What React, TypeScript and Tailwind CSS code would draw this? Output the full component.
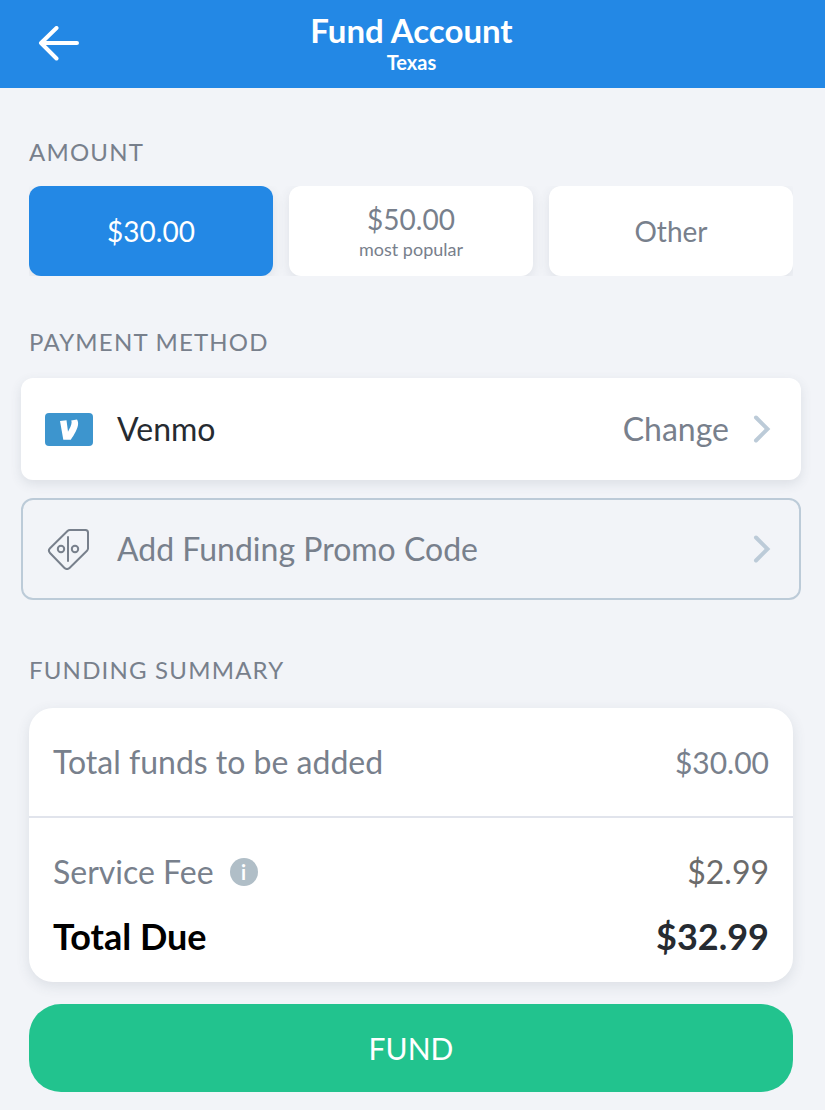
import { useState } from "react";

const amounts = [
    { label: "$30.00" },
    { label: "$50.00", note: "most popular" },
    { label: "Other" },
];

const ArrowLeft = () => (
    <svg className="h-[36px] w-[42px]" viewBox="0 0 42 36" fill="none" stroke="currentColor" strokeWidth="4" strokeLinecap="round" strokeLinejoin="round" aria-hidden="true">
        <path d="M39 17H3M18.500 2L3 17l15.500 15.500" />
    </svg>
);

const Chevron = () => (
    <svg className="h-7 w-[18px] text-[#bccbd8]" viewBox="0 0 18 28" fill="none" stroke="currentColor" strokeWidth="4" strokeLinecap="round" strokeLinejoin="miter" aria-hidden="true">
        <path d="M3 2.500L14.500 14L3 25.500" />
    </svg>
);

const VenmoLogo = () => (
    <svg className="h-[33px] w-12" viewBox="0 0 48 33" aria-hidden="true">
        <rect width="48" height="33" rx="4" fill="#3d95ce" />
        <path d="M15 8L21.500 7.300L23 18.800C24.600 15.800 26.600 12 26.600 9.600C26.600 8.600 26.400 8 26.200 7.600L32 6.500C32.800 7.800 33.100 9 33.100 10.500C33.100 15.500 29 22 25.800 26.700H18.300Z" fill="#fff" />
    </svg>
);

const PromoTag = () => (
    <svg className="h-[42px] w-[42px]" viewBox="0 0 42 42" fill="none" stroke="currentColor" strokeWidth="2" strokeLinecap="round" strokeLinejoin="round" aria-hidden="true">
        <path d="M23 2H38.500a2.500 2.500 0 0 1 2.500 2.500V20.500a3 3 0 0 1-1 2.200L22.500 40a3.500 3.500 0 0 1-5 0L3 25a3.500 3.500 0 0 1 0-4.800L20.500 3a3.500 3.500 0 0 1 2.500-1z" />
        <path d="M21 9v24" />
        <circle cx="14" cy="21" r="3.200" />
        <circle cx="28" cy="21" r="3.200" />
    </svg>
);

const SectionTitle = ({ children }: { children: string }) => (
    <h2 className="text-2xl leading-8 tracking-wider uppercase">{children}</h2>
);

const App = () => {
    const [selected, setSelected] = useState("$30.00");

    return (
        <div className="min-h-screen bg-[#f2f4f8] font-['Lato',sans-serif] text-[#78808c]">
            <header className="grid h-22 grid-cols-[1fr_auto_1fr] items-center bg-[#2388e5] pr-10 pl-[38px] text-white">
                <button type="button" aria-label="Back" className="justify-self-start">
                    <ArrowLeft />
                </button>
                <div className="text-center font-bold">
                    <h1 className="text-[33px] leading-9">Fund Account</h1>
                    <p className="text-xl leading-7">Texas</p>
                </div>
            </header>

            <main className="pt-12 pr-8 pb-[18px] pl-[29px]">
                <section>
                    <SectionTitle>Amount</SectionTitle>
                    <div className="mt-[18px] grid grid-cols-3 gap-4 overflow-hidden">
                        {amounts.map(({ label, note }) => (
                            <button
                                key={label}
                                type="button"
                                aria-pressed={selected === label}
                                onClick={() => setSelected(label)}
                                className={`flex h-[90px] flex-col items-center justify-center rounded-xl text-[28px] leading-8 shadow-[0_4px_12px_rgba(60,70,90,0.10)] ${
                                    note ? "pt-1" : ""
                                } ${selected === label ? "bg-[#2388e5] text-white" : "bg-white"}`}
                            >
                                {label}
                                {note && <span className="text-lg leading-7">{note}</span>}
                            </button>
                        ))}
                    </div>
                </section>

                <section className="mt-[50px]">
                    <SectionTitle>Payment Method</SectionTitle>
                    <div className="-mx-2 mt-5 flex flex-col gap-[18px] text-[32px] leading-10">
                        <button type="button" className="flex h-[102px] items-center rounded-xl bg-white pr-[30px] pl-6 shadow-[0_4px_12px_rgba(60,70,90,0.12)]">
                            <VenmoLogo />
                            <span className="ml-6 text-[#262b31]">Venmo</span>
                            <span className="mr-6 ml-auto">Change</span>
                            <Chevron />
                        </button>
                        <button type="button" className="flex h-[102px] items-center rounded-xl border-2 border-[#bccbd8] pr-7 pl-6">
                            <PromoTag />
                            <span className="mr-auto ml-7">Add Funding Promo Code</span>
                            <Chevron />
                        </button>
                    </div>
                </section>

                <section className="mt-[54px]">
                    <SectionTitle>Funding Summary</SectionTitle>
                    <dl className="mt-[22px] rounded-3xl bg-white text-[32px] leading-10 shadow-[0_4px_14px_rgba(60,70,90,0.12)]">
                        <div className="flex h-[110px] items-center justify-between border-b-2 border-[#e1e4ec] px-6">
                            <dt>Total funds to be added</dt>
                            <dd className="text-[30px]">$30.00</dd>
                        </div>
                        <div className="flex items-center justify-between px-6 pt-[34px]">
                            <dt className="flex items-center gap-4">
                                Service Fee
                                <button type="button" aria-label="About the service fee" className="flex size-7 items-center justify-center rounded-full bg-[#b0bec7] text-xl font-bold text-white">
                                    i
                                </button>
                            </dt>
                            <dd className="text-[#6b6b6b]">$2.99</dd>
                        </div>
                        <div className="flex items-center justify-between px-6 pt-6 pb-[26px] text-4xl leading-10 font-bold">
                            <dt className="text-black">Total Due</dt>
                            <dd className="text-[#262b31]">$32.99</dd>
                        </div>
                    </dl>
                </section>

                <button type="button" className="mt-[22px] h-[88px] w-full rounded-[32px] bg-[#22c38e] text-[30px] leading-10 text-white">
                    FUND
                </button>
            </main>
        </div>
    );
};

export default App;
